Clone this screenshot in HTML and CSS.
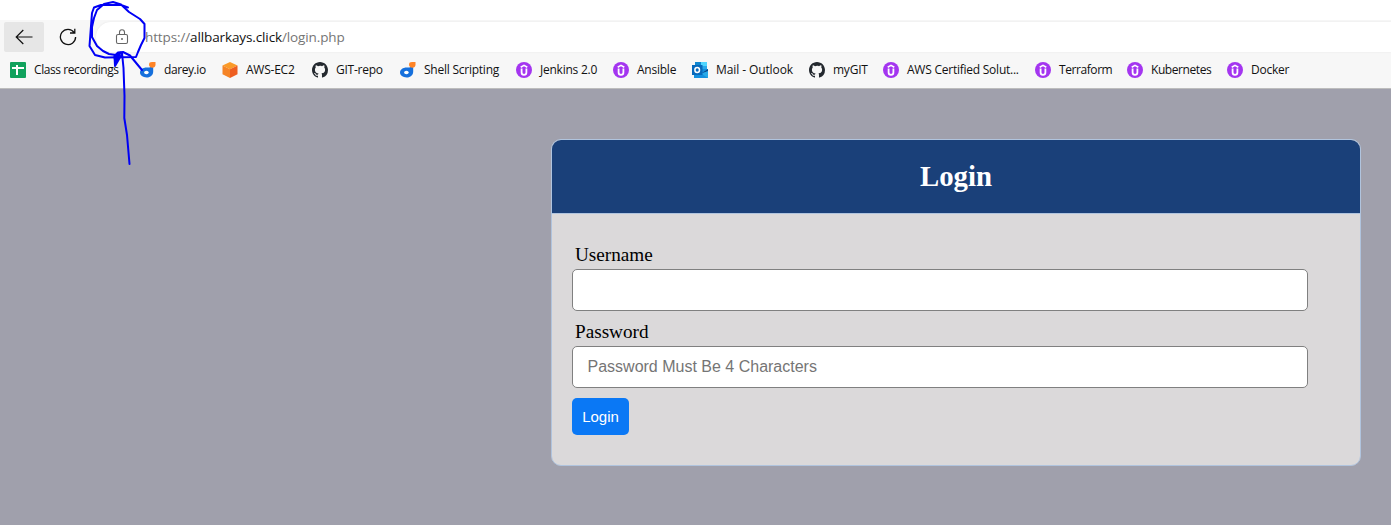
FILE: index.html
```html
<!DOCTYPE html>
<html lang="en">
<head>
<meta charset="utf-8">
<title>Login</title>
<link rel="stylesheet" href="styles.css">
</head>
<body>
<svg class="defs" width="0" height="0">
  <symbol id="darey" viewBox="0 0 16 16"><path d="M13.200 5.200v4.300c0 3.600-2.700 6-6.500 6S0 13.400 0 10.600s2.800-5 6.700-5c2 0 3.300-.1 4.300-.9z" fill="#1670dc"/><ellipse cx="6.400" cy="10.500" rx="2.300" ry="1.700" fill="#fff"/><path d="M9 2.600C9 .8 10 0 12 0h3.500v2.700c0 1.900-1.300 3-3.300 3S9 4.500 9 2.600z" fill="#ff8427"/></symbol>
  <symbol id="github" viewBox="0 0 16 16"><path fill="#24292f" d="M8 0C3.580 0 0 3.580 0 8c0 3.540 2.290 6.530 5.470 7.590.4.070.55-.17.55-.38 0-.19-.01-.82-.01-1.490-2.010.37-2.530-.49-2.690-.94-.09-.23-.48-.94-.82-1.130-.28-.15-.68-.52-.01-.53.63-.01 1.080.58 1.230.82.72 1.210 1.870.87 2.330.66.070-.52.28-.87.51-1.070-1.780-.2-3.640-.89-3.640-3.950 0-.87.31-1.590.82-2.150-.08-.2-.36-1.020.08-2.120 0 0 .67-.21 2.200.82A7.600 7.600 0 0 1 8 3.860c.68 0 1.360.09 2 .27 1.530-1.040 2.200-.82 2.200-.82.44 1.100.16 1.920.08 2.120.51.56.82 1.270.82 2.150 0 3.070-1.870 3.750-3.650 3.950.29.25.54.73.54 1.480 0 1.070-.01 1.930-.01 2.200 0 .21.15.46.55.38A8.010 8.010 0 0 0 16 8c0-4.420-3.580-8-8-8z"/></symbol>
  <symbol id="udemy" viewBox="0 0 16 16"><circle cx="8" cy="8" r="8" fill="#a435f0"/><path d="M4.700 5.200 8 3.300l3.300 1.900" fill="none" stroke="#fff" stroke-width="1.600"/><path d="M5.600 6.500v4c0 1.500.9 2.300 2.400 2.300s2.400-.8 2.400-2.300v-4" fill="none" stroke="#fff" stroke-width="1.800"/></symbol>
</svg>

<header class="browser">
  <div class="tabstrip"></div>
  <div class="toolbar">
    <div class="back"><svg width="18" height="16" viewBox="0 0 18 16"><path d="M8.300 1 1.200 8l7.100 7M1.200 8H17.500" fill="none" stroke="#111" stroke-width="1.200"/></svg></div>
    <div class="reload"><svg width="18" height="18" viewBox="0 0 18 18"><path d="M15.200 4.600A7.600 7.600 0 1 0 16.600 9M11 5h4.800V.8" fill="none" stroke="#111" stroke-width="1.300"/></svg></div>
    <div class="address">
      <svg width="14" height="16" viewBox="0 0 14 16"><rect x="1.500" y="5.500" width="11" height="9" rx="1.500" fill="none" stroke="#666" stroke-width="1.100"/><path d="M4.500 5.500V3.300a2.500 2.500 0 0 1 5 0v2.200" fill="none" stroke="#666" stroke-width="1.100"/><circle cx="7" cy="10" r=".9" fill="#555"/></svg>
      <span class="url">https://<b>allbarkays.click</b>/login.php</span>
    </div>
  </div>
  <nav class="bookmarks">
    <a class="tight"><svg viewBox="0 0 16 16"><rect width="16" height="16" rx="1" fill="#11a25d"/><path d="M2 6h12M7 3v10" stroke="#fff" stroke-width="2"/></svg><span>Class recordings</span></a>
    <a class="tight"><svg><use href="#darey"/></svg><span>darey.io</span></a>
    <a><svg viewBox="0 0 16 16"><path d="m8 0 7.500 3.500L8 7.300.5 3.500z" fill="#fa9a28"/><path d="M.5 3.500 8 7.300V16L.5 12.300z" fill="#f58426"/><path d="M15.500 3.500 8 7.300V16l7.500-3.700z" fill="#ee5e20"/></svg><span>AWS-EC2</span></a>
    <a><svg><use href="#github"/></svg><span>GIT-repo</span></a>
    <a><svg><use href="#darey"/></svg><span>Shell Scripting</span></a>
    <a><svg><use href="#udemy"/></svg><span>Jenkins 2.0</span></a>
    <a><svg><use href="#udemy"/></svg><span>Ansible</span></a>
    <a class="wide"><svg viewBox="0 0 16 16"><path d="M3 0h12v8H3z" fill="#29a8ea"/><path d="M9 0h6v4H9z" fill="#50d5ff"/><path d="M3 0h6v4H3z" fill="#1087d0"/><path d="M2 7h14v9H2z" fill="#1490df"/><path d="m16 7-7 4.500 7 4.500z" fill="#28a9e8"/><path d="m9 11.500 7-4.500v2z" fill="#0a4589"/><rect y="3" width="10.500" height="10" fill="#0869bb"/><ellipse cx="5.200" cy="8" rx="2.300" ry="2.500" fill="none" stroke="#fff" stroke-width="1.500"/></svg><span>Mail - Outlook</span></a>
    <a><svg><use href="#github"/></svg><span>myGIT</span></a>
    <a><svg><use href="#udemy"/></svg><span>AWS Certified Solut...</span></a>
    <a class="tight"><svg><use href="#udemy"/></svg><span>Terraform</span></a>
    <a class="tight"><svg><use href="#udemy"/></svg><span>Kubernetes</span></a>
    <a><svg><use href="#udemy"/></svg><span>Docker</span></a>
  </nav>
</header>

<main class="page">
  <section class="card">
    <h2 class="card-title">Login</h2>
    <form class="form">
      <label for="user">Username</label>
      <input id="user" type="text">
      <label for="pass">Password</label>
      <input id="pass" type="password" placeholder="Password Must Be 4 Characters">
      <button type="button">Login</button>
    </form>
  </section>
</main>

<svg class="ink" width="170" height="170" viewBox="0 0 170 170" fill="none" stroke="#0000f5" stroke-width="2" stroke-linecap="round" stroke-linejoin="round">
  <path d="M128 7.500 121 5 101 5 94 7.500 92 13 91 26 89.500 46 95 55 105 57.500 136 57 138 52 141 45 144.500 38 144.500 24 140 19 129 12 121 4.500 113 2 104 4 97 10 94 18 92 27 92 37 97 46 103 51 109 54 116 55"/>
  <path d="M115 66 114.500 56 118 52.500 123 52 130 55.500 137 64 142 70M115 66 122 54M116 62 118 57M122 53 123.500 68 124.500 96 124.300 118 127 135 129.500 164"/>
  <path d="m114.500 57 6-4.500-5 10z" fill="#0000f5"/>
</svg>
</body>
</html>
```
FILE: styles.css
```css
* { box-sizing: border-box; }
body { margin: 0; height: 525px; overflow: hidden; display: flex; flex-direction: column; background: #a0a0ac; }
.defs { position: absolute; }
.browser { height: 89px; flex: none; background: #f7f7f7; border-bottom: 1px solid #bdbdbd; font-family: "Open Sans", sans-serif; }
.tabstrip { height: 20px; background: #fff; }
.toolbar { height: 32px; padding: 2px 0 0 4px; display: flex; }
.back { width: 40px; height: 30px; background: #e6e6e6; border-radius: 2px; display: flex; align-items: center; justify-content: center; }
.reload { width: 48px; height: 30px; display: flex; align-items: center; justify-content: center; }
.address { flex: 1; height: 30px; margin-left: 4px; padding-left: 19px; background: #fff; border-radius: 15px 0 0 15px; display: flex; align-items: center; gap: 16px; box-shadow: 0 0 2px #e4e4e4; }
.url { font-size: 13.5px; letter-spacing: -.12px; color: #757575; white-space: nowrap; }
.url b { font-weight: 400; color: #111; }
.bookmarks { height: 36px; padding-left: 10px; display: grid; grid-template-columns: 130px 82px 90px 88px 116px 97px 79px 117px 74px 152px 92px 100px 100px; align-items: center; }
.bookmarks a { display: flex; align-items: center; gap: 8px; font-size: 12px; letter-spacing: -.24px; color: #111; white-space: nowrap; }
.bookmarks a.tight { letter-spacing: -.42px; }
.bookmarks a.wide { letter-spacing: -.1px; }
.bookmarks span { margin-top: -1px; }
.bookmarks svg { width: 16px; height: 16px; flex: none; }
.page { flex: 1; padding: 50px 30px 0 551px; }
.card { width: 810px; height: 327px; border: 1px solid #b0c4de; border-radius: 10px; overflow: hidden; background: #dbd9da; font-family: "Liberation Serif", serif; }
.card-title { margin: 0; height: 74px; line-height: 73px; text-align: center; font-size: 28.8px; color: #fff; background: #1a4079; border-bottom: 1px solid #b0c4de; }
.form { padding: 30px 20px 0; display: flex; flex-direction: column; align-items: flex-start; }
.form label { margin: 0 3px; height: 25px; line-height: 21px; font-size: 19.2px; color: #000; }
.form input { width: 736px; height: 42px; padding: 0 14.5px; margin-bottom: 10px; border: 1px solid gray; border-radius: 5px; background: #fff; font-family: "Liberation Sans", sans-serif; font-size: 16px; }
.form input::placeholder { color: #757575; }
.form button { width: 57px; height: 37px; padding: 0; border: 0; border-radius: 5px; background: #0a78f5; color: #fff; font-family: "Liberation Sans", sans-serif; font-size: 15px; }
.ink { position: absolute; left: 0; top: 0; pointer-events: none; }
```
